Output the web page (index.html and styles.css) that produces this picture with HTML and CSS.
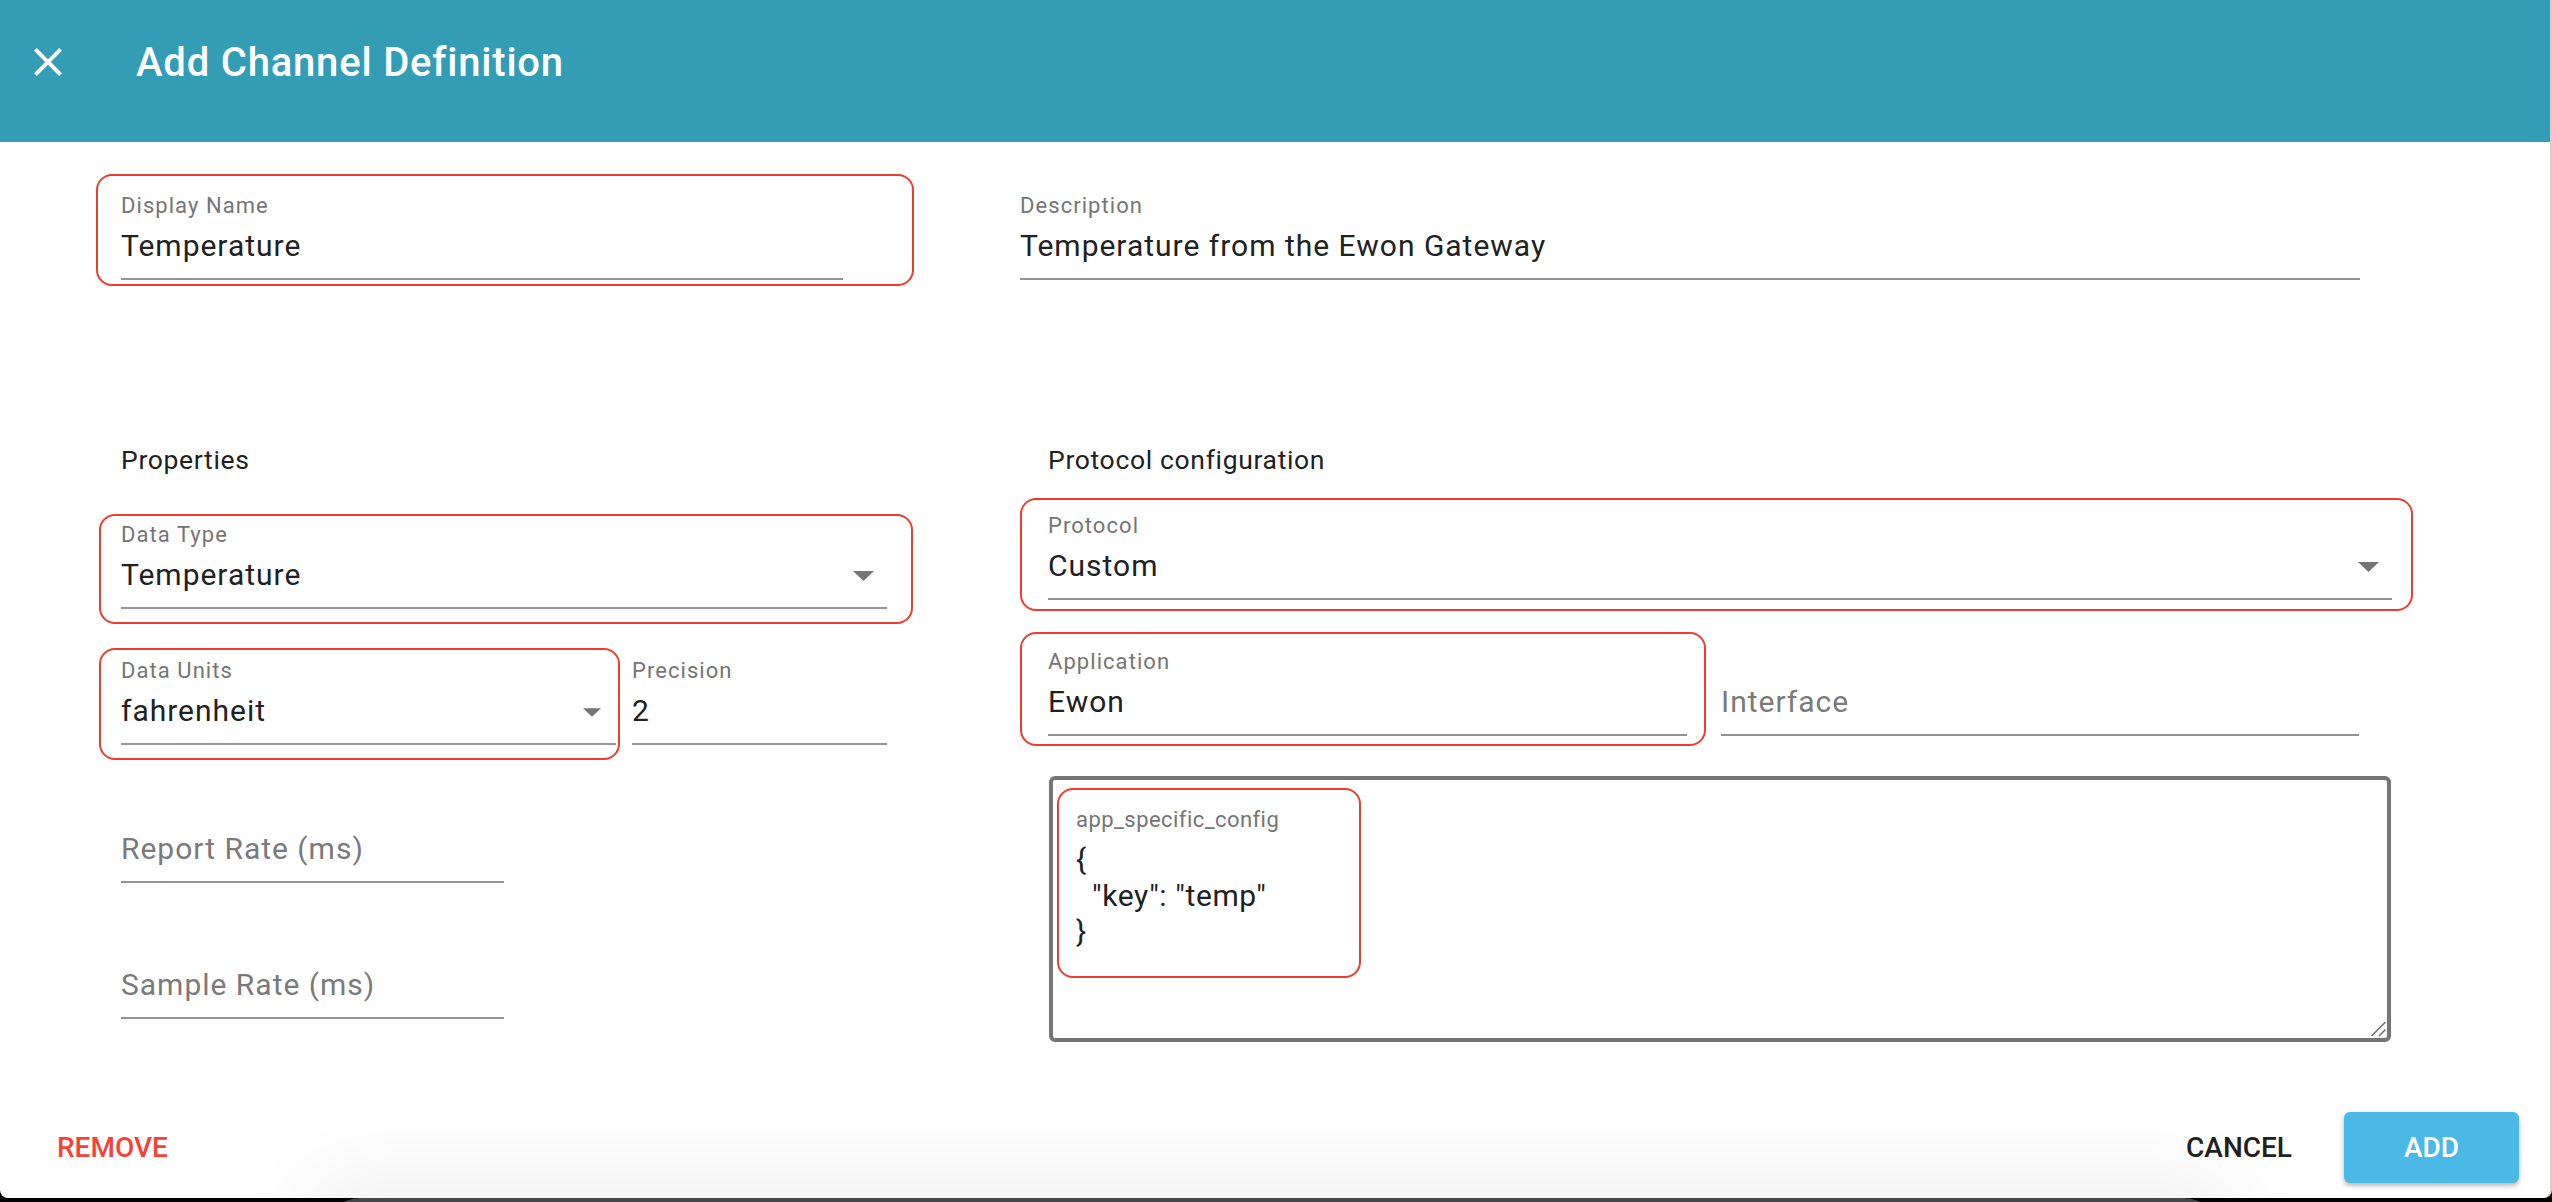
FILE: index.html
```html
<!DOCTYPE html>
<html lang="en">
<head>
<meta charset="utf-8">
<title>Add Channel Definition</title>
<link rel="stylesheet" href="styles.css">
</head>
<body>
<div class="dialog">
  <header class="header">
    <svg class="close" viewBox="0 0 24 24" aria-hidden="true"><path d="M19 6.41L17.59 5 12 10.59 6.41 5 5 6.41 10.59 12 5 17.59 6.41 19 12 13.41 17.59 19 19 17.59 13.41 12z"/></svg>
    <h1 class="title">Add Channel Definition</h1>
  </header>

  <main class="content">
    <div class="row-top">
      <div class="hl hl-name">
        <div class="field">
          <div class="field-label">Display Name</div>
          <div class="field-value">Temperature</div>
        </div>
      </div>
      <div class="field">
        <div class="field-label">Description</div>
        <div class="field-value">Temperature from the Ewon Gateway</div>
      </div>
    </div>

    <div class="row-sections">
      <section class="col">
        <h2 class="section-title">Properties</h2>
        <div class="hl hl-type">
          <div class="field">
            <div class="field-label">Data Type</div>
            <div class="field-value"><span>Temperature</span><svg class="arrow" viewBox="0 0 21 10"><path d="M0 0h21L10.5 10z"/></svg></div>
          </div>
        </div>
        <div class="pair pair-units">
          <div class="hl hl-units">
            <div class="field">
              <div class="field-label">Data Units</div>
              <div class="field-value"><span>fahrenheit</span><svg class="arrow arrow-sm" viewBox="0 0 21 10"><path d="M0 0h21L10.5 10z"/></svg></div>
            </div>
          </div>
          <div class="field precision">
            <div class="field-label">Precision</div>
            <div class="field-value">2</div>
          </div>
        </div>
        <div class="field rate rate-report">
          <div class="field-label"></div>
          <div class="field-value placeholder">Report Rate (ms)</div>
        </div>
        <div class="field rate rate-sample">
          <div class="field-label"></div>
          <div class="field-value placeholder">Sample Rate (ms)</div>
        </div>
      </section>

      <section class="col">
        <h2 class="section-title">Protocol configuration</h2>
        <div class="hl hl-proto">
          <div class="field">
            <div class="field-label">Protocol</div>
            <div class="field-value"><span>Custom</span><svg class="arrow" viewBox="0 0 21 10"><path d="M0 0h21L10.5 10z"/></svg></div>
          </div>
        </div>
        <div class="pair pair-app">
          <div class="hl hl-app">
            <div class="field">
              <div class="field-label">Application</div>
              <div class="field-value">Ewon</div>
            </div>
          </div>
          <div class="field interface">
            <div class="field-label"></div>
            <div class="field-value placeholder">Interface</div>
          </div>
        </div>
        <div class="json-box">
          <div class="hl hl-json">
            <div class="json-label">app_specific_config</div>
            <div class="json-text">{
  "key": "temp"
}</div>
          </div>
          <svg class="resize" viewBox="0 0 16 16" aria-hidden="true"><path d="M1.5 15L15.5 1M9 15L15.5 8.5"/></svg>
        </div>
      </section>
    </div>
  </main>

  <footer class="footer">
    <button class="btn btn-remove">REMOVE</button>
    <button class="btn btn-cancel">CANCEL</button>
    <button class="btn btn-add">ADD</button>
  </footer>
</div>
<div class="dock"></div>
</body>
</html>
```

FILE: styles.css
```css
* { box-sizing: border-box; }

html, body {
  margin: 0;
  height: 1202px;
  overflow: hidden;
}

body {
  background: #000;
  font-family: Roboto, "Liberation Sans", Arial, sans-serif;
  position: relative;
}

.dialog {
  width: 2550px;
  height: 1198px;
  background: #fff;
  border-radius: 0 0 8px 8px;
  display: flex;
  flex-direction: column;
  box-shadow: 2px 0 0 #d2d2d2;
  position: relative;
}

/* Header */
.header {
  height: 142px;
  flex: none;
  background: #349db6;
  display: flex;
  align-items: center;
  padding-bottom: 18px;
}

.close {
  width: 48px;
  height: 48px;
  margin-left: 24px;
  fill: #fff;
  flex: none;
}

.title {
  margin: 0 0 0 64px;
  font-size: 40px;
  font-weight: 500;
  color: #fff;
  letter-spacing: 0.02em;
}

/* Fields */
.field {
  display: flex;
  flex-direction: column;
  border-bottom: 2px solid #949494;
  padding-bottom: 14px;
}

.field-label {
  font-size: 22px;
  line-height: 24px;
  height: 24px;
  margin-bottom: 10px;
  color: #757575;
  letter-spacing: 0.048em;
  white-space: nowrap;
}

.field-value {
  font-size: 30px;
  line-height: 36px;
  height: 36px;
  color: #212121;
  display: flex;
  align-items: center;
  justify-content: space-between;
  letter-spacing: 0.033em;
  white-space: nowrap;
}

.placeholder {
  color: #7a7a7a;
}

.arrow {
  width: 21px;
  height: 10px;
  fill: #757575;
  margin-right: 13px;
  margin-top: 2px;
  flex: none;
}

.arrow-sm {
  width: 18px;
  height: 9px;
  margin-right: 15px;
}

/* Highlight outlines */
.hl {
  border: 2px solid #f03c2e;
  border-radius: 16px;
}

.hl-name {
  padding: 18px 69px 4px 23px;
  margin: -20px -71px -6px -25px;
}

.hl-type {
  padding: 7px 24px 13px 20px;
  margin: 38px -26px -15px -22px;
}

.hl-units {
  flex: none;
  width: 521px;
  padding: 9px 2px 13px 20px;
  margin: -11px -4px -15px -22px;
}

.hl-proto {
  padding: 14px 19px 9px 26px;
  margin: 22px -21px -11px -28px;
}

.hl-app {
  flex: none;
  width: 686px;
  padding: 16px 17px 8px 26px;
  margin: -18px -19px -10px -28px;
}

/* Layout */
.content {
  flex: none;
}

.row-top {
  display: grid;
  grid-template-columns: 722px 1340px;
  column-gap: 177px;
  padding-left: 121px;
  margin-top: 52px;
}

.row-sections {
  display: grid;
  grid-template-columns: 766px 1344px;
  column-gap: 161px;
  padding-left: 121px;
  margin-top: 164px;
}

.col {
  display: flex;
  flex-direction: column;
}

.section-title {
  margin: 0;
  font-size: 26.5px;
  line-height: 32px;
  font-weight: 400;
  color: #212121;
  letter-spacing: 0.025em;
}

.pair {
  display: flex;
  align-items: flex-start;
}

.pair-units {
  gap: 16px;
  margin-top: 50px;
}

.precision {
  width: 255px;
}

.rate {
  width: 383px;
}

.rate-report { margin-top: 52px; }
.rate-sample { margin-top: 50px; }

.pair-app {
  gap: 34px;
  margin-top: 50px;
}

.interface {
  width: 638px;
}

/* JSON box */
.json-box {
  position: relative;
  margin: 40px 0 0 1px;
  width: 1342px;
  height: 266px;
  border: 4px solid #757575;
  border-radius: 6px;
  padding: 8px 0 0 4px;
}

.hl-json {
  width: 304px;
  height: 190px;
  padding: 18px 0 0 17px;
}

.json-label {
  font-size: 22px;
  line-height: 24px;
  color: #757575;
  letter-spacing: 0.02em;
}

.json-text {
  margin-top: 10px;
  font-size: 30px;
  line-height: 36px;
  color: #212121;
  white-space: pre;
  letter-spacing: 0.02em;
}

.resize {
  position: absolute;
  right: 1px;
  bottom: 1px;
  width: 16px;
  height: 16px;
  stroke: #6a6a6a;
  stroke-width: 1.5;
  fill: none;
}

/* Footer */
.footer {
  margin-top: auto;
  margin-bottom: 15px;
  height: 71px;
  flex: none;
  display: flex;
  align-items: center;
  padding: 0 31px 0 57px;
}

.btn {
  border: none;
  background: none;
  padding: 0;
  font-family: Roboto, "Liberation Sans", Arial, sans-serif;
  font-size: 28px;
  font-weight: 500;
  line-height: normal;
  cursor: pointer;
}

.btn-remove {
  color: #f44336;
  margin-right: auto;
}

.btn-cancel {
  color: #212121;
}

.btn-add {
  margin-left: 52px;
  width: 175px;
  height: 71px;
  background: #4bb9e6;
  color: #fff;
  border-radius: 6px;
  box-shadow: 0 3px 4px rgba(0, 0, 0, 0.22), 0 1px 8px rgba(0, 0, 0, 0.08);
}

/* Element peeking in below the dialog, casting a soft shadow */
.dock {
  position: absolute;
  left: 321px;
  top: 1198px;
  width: 1902px;
  height: 40px;
  background: #474747;
  border-radius: 60px 60px 0 0;
  box-shadow: 0 0 80px 24px rgba(0, 0, 0, 0.06);
}
```
